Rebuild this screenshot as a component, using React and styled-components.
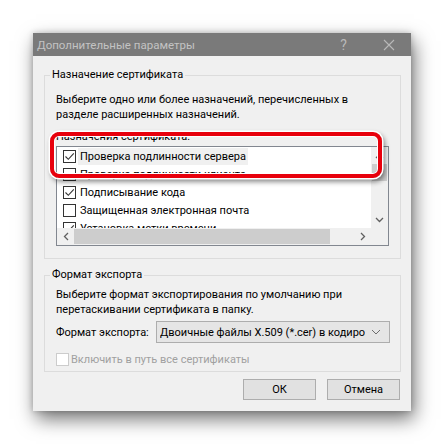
import React from "react";
import styled, { createGlobalStyle } from "styled-components";

const purposes = [
  { label: "Проверка подлинности сервера", checked: true, selected: true },
  { label: "Проверка подлинности клиента", checked: false },
  { label: "Подписывание кода", checked: true },
  { label: "Защищенная электронная почта", checked: false },
  { label: "Установка метки времени", checked: true },
];

export default function App() {
  return (
    <>
      <GlobalStyle />
      <Page>
        <Dialog>
          <TitleBar>
            <Title>Дополнительные параметры</Title>
            <TitleButton>?</TitleButton>
            <TitleButton>
              <svg width="12" height="12" viewBox="0 0 12 12">
                <path d="M1 1L11 11M11 1L1 11" stroke="#b9b9b9" strokeWidth="1.1" fill="none" />
              </svg>
            </TitleButton>
          </TitleBar>

          <Body>
            <Group>
              <Legend>Назначение сертификата</Legend>
              <Desc>
                Выберите одно или более назначений, перечисленных в
                <br />
                разделе расширенных назначений.
              </Desc>
              <ListArea>
                <ListLabel>Назначения сертификата:</ListLabel>
                <ListBox>
                  <ListInner>
                    <Rows>
                      {purposes.map((p) => (
                        <Row key={p.label}>
                          <CheckBox checked={p.checked} />
                          <RowText $selected={p.selected}>{p.label}</RowText>
                        </Row>
                      ))}
                    </Rows>
                    <VScroll>
                      <Arrow>
                        <svg width="9" height="6" viewBox="0 0 9 6">
                          <path d="M1 5L4.5 1.5L8 5" stroke="#606060" strokeWidth="1.3" fill="none" />
                        </svg>
                      </Arrow>
                      <VThumb />
                      <VTrack />
                      <Arrow>
                        <svg width="9" height="6" viewBox="0 0 9 6">
                          <path d="M1 1L4.5 4.5L8 1" stroke="#606060" strokeWidth="1.3" fill="none" />
                        </svg>
                      </Arrow>
                    </VScroll>
                  </ListInner>
                  <HScroll>
                    <HArrow>
                      <svg width="6" height="9" viewBox="0 0 6 9">
                        <path d="M5 1L1.5 4.5L5 8" stroke="#606060" strokeWidth="1.3" fill="none" />
                      </svg>
                    </HArrow>
                    <HThumb />
                    <HTrack />
                    <HArrow>
                      <svg width="6" height="9" viewBox="0 0 6 9">
                        <path d="M1 1L4.5 4.5L1 8" stroke="#606060" strokeWidth="1.3" fill="none" />
                      </svg>
                    </HArrow>
                    <Corner />
                  </HScroll>
                </ListBox>
                <Highlight />
              </ListArea>
            </Group>

            <Group $second>
              <Legend>Формат экспорта</Legend>
              <Desc $tight>
                Выберите формат экспортирования по умолчанию при
                <br />
                перетаскивании сертификата в папку.
              </Desc>
              <FormatRow>
                <span>Формат экспорта:</span>
                <Combo>
                  <ComboText>Двоичные файлы X.509 (*.cer) в кодировке DER</ComboText>
                  <svg width="10" height="6" viewBox="0 0 10 6">
                    <path d="M1 1L5 5L9 1" stroke="#6d6d6d" strokeWidth="1" fill="none" />
                  </svg>
                </Combo>
              </FormatRow>
              <DisabledRow>
                <CheckBox disabled />
                <span>Включить в путь все сертификаты</span>
              </DisabledRow>
            </Group>

            <Buttons>
              <Button>ОК</Button>
              <Button>Отмена</Button>
            </Buttons>
          </Body>
        </Dialog>
      </Page>
    </>
  );
}

function CheckBox({ checked, disabled }) {
  return (
    <Box $disabled={disabled}>
      {checked && (
        <svg width="11" height="11" viewBox="0 0 11 11">
          <path d="M1.5 5.5L4.3 8.3L9.8 2.3" stroke="#333" strokeWidth="1.1" fill="none" />
        </svg>
      )}
    </Box>
  );
}

/* ================== STYLES ================== */

const GlobalStyle = createGlobalStyle`
  * { box-sizing: border-box; }
  body {
    margin: 0;
    background: #fff;
    font-family: Roboto, "Noto Sans", sans-serif;
    font-size: 11px;
    color: #000;
    white-space: nowrap;
  }
`;

const Page = styled.div`
  width: 444px;
  height: 444px;
  padding: 33px 0 0 33px;
  overflow: hidden;
`;

const Dialog = styled.div`
  width: 378px;
  height: 378px;
  background: #f0f0f0;
  display: flex;
  flex-direction: column;
  box-shadow: 3px 8px 18px rgba(0, 0, 0, 0.55), 0 0 6px rgba(0, 0, 0, 0.2);
`;

const TitleBar = styled.div`
  height: 23px;
  background: #7a7a7a;
  display: flex;
  align-items: center;
  padding-left: 4px;
`;

const Title = styled.div`
  flex: 1;
  color: #c3c3c3;
  font-size: 11.5px;
`;

const TitleButton = styled.div`
  width: 45px;
  height: 23px;
  display: flex;
  align-items: center;
  justify-content: center;
  color: #b9b9b9;
  font-size: 14px;
`;

const Body = styled.div`
  flex: 1;
  padding: 11px 10px 0 11px;
  display: flex;
  flex-direction: column;
`;

const Group = styled.fieldset`
  margin: ${(p) => (p.$second ? "8px 0 0 0" : "0")};
  border: 1px solid #dcdcdc;
  padding: 0 11px ${(p) => (p.$second ? "5px" : "12px")};
  min-width: 0;
`;

const Legend = styled.legend`
  padding: 0 2px;
  margin-left: -6px;
  line-height: 16px;
`;

const Desc = styled.div`
  margin-top: ${(p) => (p.$tight ? "5px" : "10px")};
  line-height: 14.5px;
`;

const ListArea = styled.div`
  position: relative;
  margin-top: 8px;
`;

const ListLabel = styled.div`
  line-height: 14px;
`;

const ListBox = styled.div`
  margin-top: 2px;
  height: 100px;
  border: 1px solid #828790;
  background: #fff;
  display: flex;
  flex-direction: column;
  overflow: hidden;
`;

const ListInner = styled.div`
  flex: 1;
  display: flex;
  min-height: 0;
`;

const Rows = styled.div`
  flex: 1;
  overflow: hidden;
`;

const Row = styled.div`
  height: 18px;
  display: flex;
  align-items: center;
  padding-left: 6px;
`;

const Box = styled.span`
  width: 13px;
  height: 13px;
  flex: none;
  border: 1px solid ${(p) => (p.$disabled ? "#cccccc" : "#333333")};
  background: #fff;
  display: flex;
  align-items: center;
  justify-content: center;
  margin-right: 2px;
`;

const RowText = styled.span`
  padding: 1px 2px 0 2px;
  line-height: 16px;
  background: ${(p) => (p.$selected ? "#f0f0f0" : "transparent")};
`;

const VScroll = styled.div`
  width: 17px;
  background: #f0f0f0;
  display: flex;
  flex-direction: column;
`;

const Arrow = styled.div`
  height: 17px;
  flex: none;
  display: flex;
  align-items: center;
  justify-content: center;
`;

const VThumb = styled.div`
  height: 17px;
  margin: 0 1px;
  background: #cdcdcd;
`;

const VTrack = styled.div`
  flex: 1;
`;

const HScroll = styled.div`
  height: 17px;
  flex: none;
  background: #f0f0f0;
  display: flex;
`;

const HArrow = styled.div`
  width: 17px;
  display: flex;
  align-items: center;
  justify-content: center;
`;

const HThumb = styled.div`
  width: 256px;
  margin: 1px 0;
  background: #cdcdcd;
`;

const HTrack = styled.div`
  flex: 1;
`;

const Corner = styled.div`
  width: 17px;
`;

const Highlight = styled.div`
  position: absolute;
  left: -6px;
  top: 2px;
  width: 332px;
  height: 46px;
  border: 4.5px solid #e8000c;
  border-radius: 9px;
  box-shadow: 0 0 0 1.5px #fff, 2px 3px 5px 1px rgba(0, 0, 0, 0.45),
    inset 0 0 0 1px #fff;
`;

const FormatRow = styled.div`
  margin-top: 4px;
  display: flex;
  align-items: center;
  justify-content: space-between;
`;

const Combo = styled.div`
  width: 234px;
  height: 22px;
  margin-right: -1px;
  background: #e5e5e5;
  border: 1px solid #adadad;
  display: flex;
  align-items: center;
  padding: 0 8px 0 3px;
  gap: 6px;
`;

const ComboText = styled.span`
  flex: 1;
  overflow: hidden;
`;

const DisabledRow = styled.div`
  margin-top: 10px;
  display: flex;
  align-items: center;
  color: #a0a0a0;
`;

const Buttons = styled.div`
  margin-top: 7px;
  margin-right: 1px;
  display: flex;
  justify-content: flex-end;
  gap: 11px;
`;

const Button = styled.div`
  width: 73px;
  height: 21px;
  background: #e1e1e1;
  border: 1px solid #adadad;
  display: flex;
  align-items: center;
  justify-content: center;
`;
